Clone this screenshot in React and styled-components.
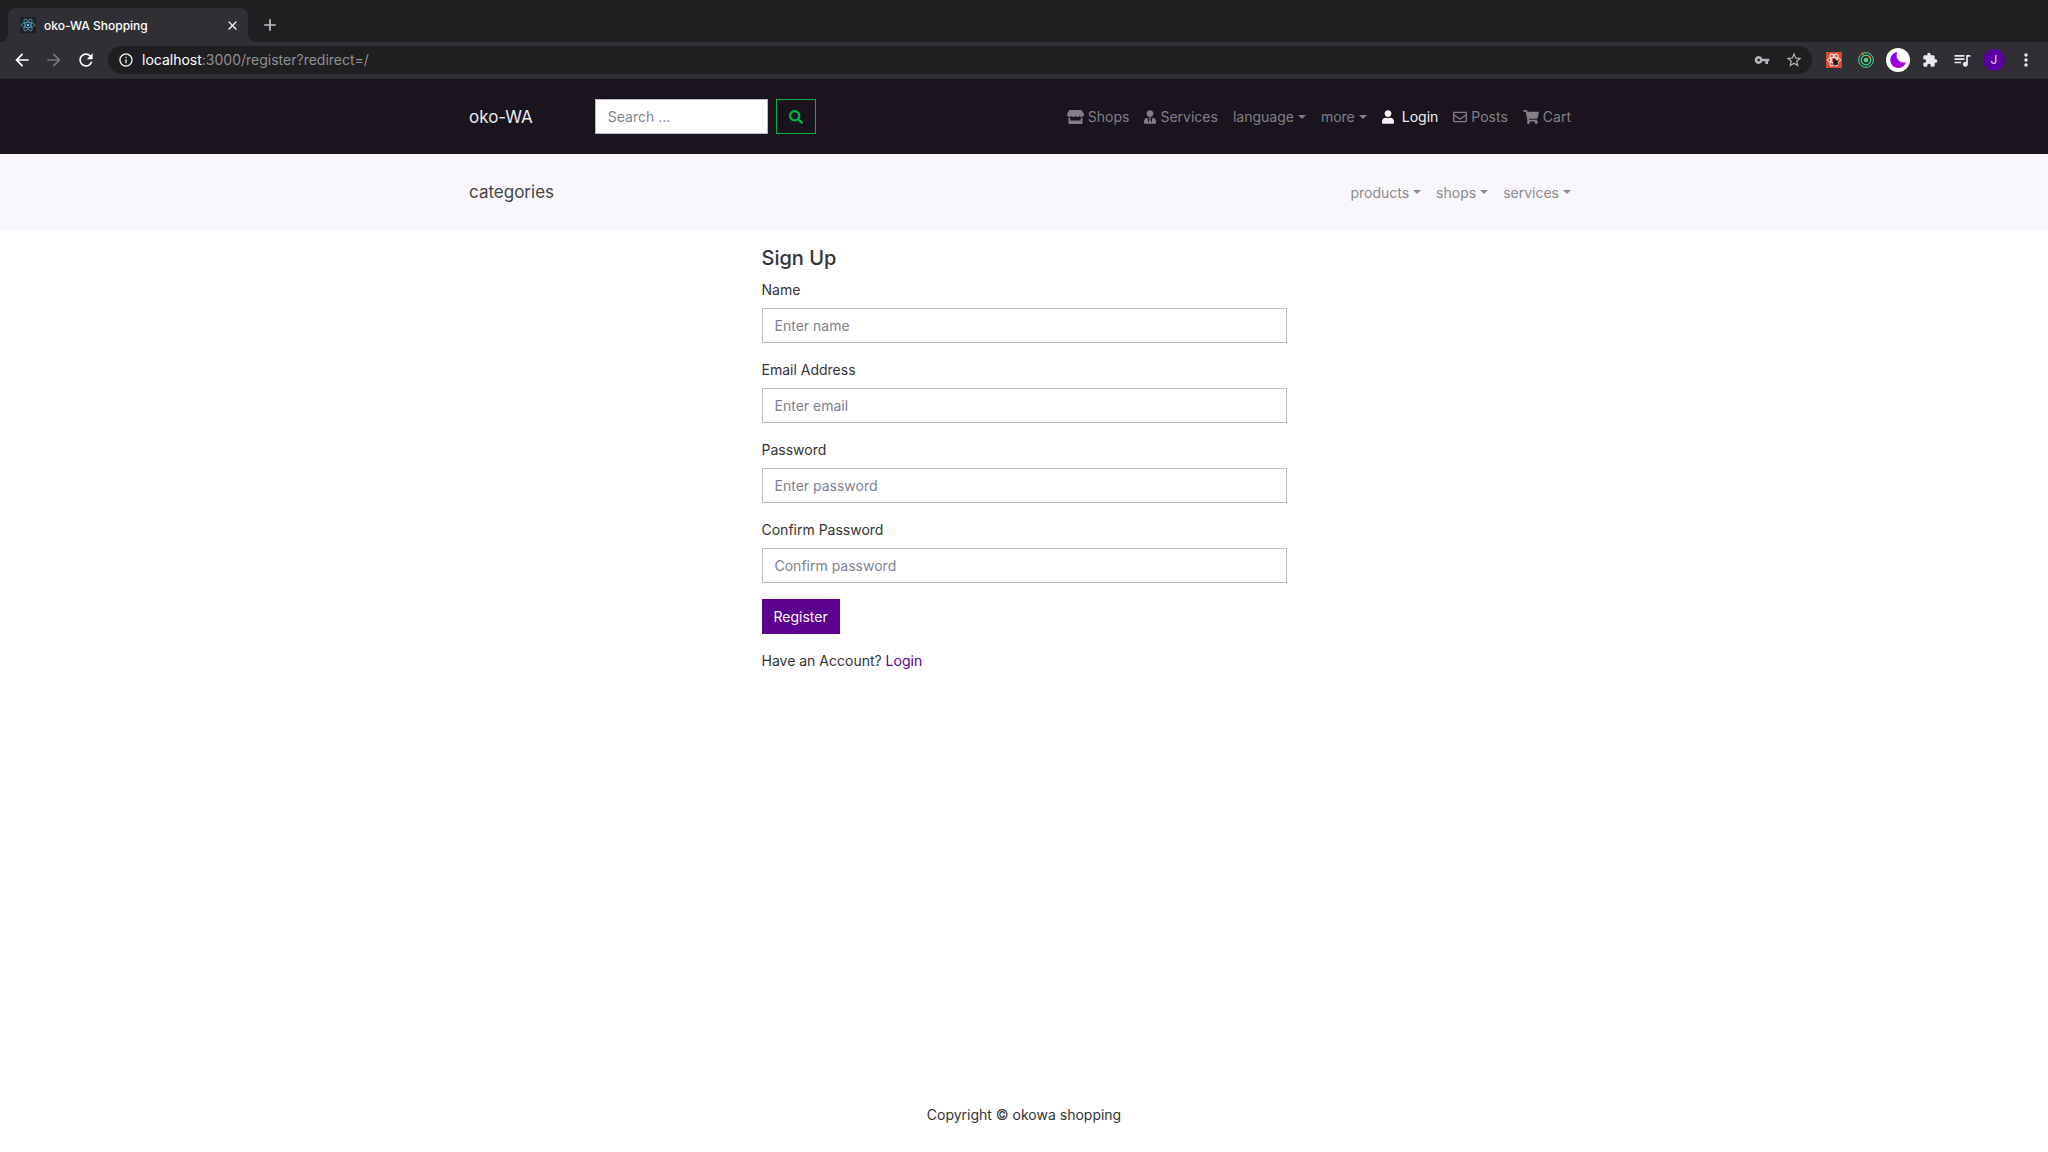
import React from "react";
import styled, { createGlobalStyle, css } from "styled-components";
import {
  FaStore,
  FaUserTie,
  FaUser,
  FaRegEnvelope,
  FaShoppingCart,
  FaSearch,
} from "react-icons/fa";
import {
  MdArrowBack,
  MdArrowForward,
  MdRefresh,
  MdClose,
  MdAdd,
  MdInfoOutline,
  MdVpnKey,
  MdStarBorder,
  MdExtension,
  MdQueueMusic,
  MdMoreVert,
} from "react-icons/md";

const c = {
  strip: "#1f1f22",
  toolbar: "#303034",
  dark: "#1a141f",
  light: "#f9f7fc",
  text: "#333333",
  primary: "#5b008f",
  success: "#00b53f",
  border: "#bdb8c4",
  placeholder: "#7d838f",
};

const GlobalStyle = createGlobalStyle`
  *, *::before, *::after { box-sizing: border-box; }
  body {
    margin: 0;
    background: #fff;
    color: ${c.text};
    font-family: Inter, Roboto, "Liberation Sans", sans-serif;
    font-size: 14px;
    line-height: 21px;
  }
  button, input { font: inherit; margin: 0; border-radius: 0; }
  button { cursor: pointer; }
  a { text-decoration: none; }
  svg { display: block; flex: none; }
`;

const Window = styled.div`
  display: flex;
  flex-direction: column;
  min-height: 100vh;
`;

/* Browser frame */

const TabStrip = styled.div`
  display: flex;
  align-items: flex-end;
  height: 42px;
  padding-left: 8px;
  background: ${c.strip};
`;

const Tab = styled.div`
  position: relative;
  display: flex;
  align-items: center;
  gap: 8px;
  width: 240px;
  height: 34px;
  padding: 0 8px 0 12px;
  border-radius: 8px 8px 0 0;
  background: ${c.toolbar};

  &::before,
  &::after {
    content: "";
    position: absolute;
    bottom: 0;
    width: 8px;
    height: 8px;
  }
  &::before {
    left: -8px;
    background: radial-gradient(circle at 0 0, transparent 8px, ${c.toolbar} 8px);
  }
  &::after {
    right: -8px;
    background: radial-gradient(circle at 100% 0, transparent 8px, ${c.toolbar} 8px);
  }
`;

const TabTitle = styled.span`
  flex: 1;
  color: #fff;
  font-size: 12px;
  font-weight: 500;
`;

const IconButton = styled.button`
  display: flex;
  align-items: center;
  justify-content: center;
  width: ${(p) => p.$size || 24}px;
  height: ${(p) => p.$size || 24}px;
  padding: 0;
  border: 0;
  background: none;
  color: ${(p) => p.$color || "#e8eaed"};
`;

const NewTabButton = styled(IconButton)`
  margin: 0 0 5px 10px;
`;

const Toolbar = styled.div`
  display: flex;
  align-items: center;
  height: 37px;
  padding-left: 10px;
  padding-right: 10px;
  border-bottom: 1px solid #29282d;
  background: ${c.toolbar};
`;

const NavButtons = styled.div`
  display: flex;
  gap: 8px;
  margin-right: 10px;
`;

const AddressBar = styled.div`
  display: flex;
  flex: 1;
  align-items: center;
  height: 28px;
  padding: 0 6px 0 10px;
  border-radius: 14px;
  background: ${c.strip};
`;

const Url = styled.span`
  flex: 1;
  margin-left: 8px;
  color: #8f9093;
  line-height: 20px;
`;

const UrlHost = styled.span`
  color: #fff;
`;

const AddressActions = styled.div`
  display: flex;
  gap: 8px;
`;

const Extensions = styled.div`
  display: flex;
  align-items: center;
  gap: 8px;
  margin-left: 10px;
`;

const Avatar = styled.button`
  width: 22px;
  height: 22px;
  padding: 0;
  border: 0;
  border-radius: 50%;
  background: #5a00a0;
  color: #e6dcf0;
  font-size: 12px;
  line-height: 22px;
`;

const ReactFavicon = () => (
  <svg width="16" height="16" viewBox="0 0 16 16" fill="none" stroke="#4ba3c3">
    <rect width="16" height="16" rx="1.5" fill="#1f2023" stroke="none" />
    <g strokeWidth="0.8">
      <ellipse cx="8" cy="8" rx="6.7" ry="2.6" />
      <ellipse cx="8" cy="8" rx="6.7" ry="2.6" transform="rotate(60 8 8)" />
      <ellipse cx="8" cy="8" rx="6.7" ry="2.6" transform="rotate(120 8 8)" />
    </g>
    <circle cx="8" cy="8" r="1.2" fill="#61dafb" stroke="none" />
  </svg>
);

const DevtoolsIcon = () => (
  <svg width="16" height="16" viewBox="0 0 16 16" fill="none">
    <rect width="16" height="16" fill="#d84a33" />
    <g stroke="#f6e4df" strokeWidth="1">
      <ellipse cx="8" cy="8" rx="6.5" ry="2.6" />
      <ellipse cx="8" cy="8" rx="6.5" ry="2.6" transform="rotate(60 8 8)" />
      <ellipse cx="8" cy="8" rx="6.5" ry="2.6" transform="rotate(120 8 8)" />
    </g>
    <ellipse cx="9.6" cy="10.6" rx="2.2" ry="2.7" fill="#24120f" />
    <circle cx="8.3" cy="8" r="1.2" fill="#24120f" />
    <path
      d="M6.5 9.5l6 3M6.5 12.6l6-3.6M8.5 13.5l3-5.5"
      stroke="#24120f"
      strokeWidth="0.7"
    />
  </svg>
);

const OrbitIcon = () => (
  <svg width="16" height="16" viewBox="0 0 16 16" fill="none" stroke="#3ddc97">
    <circle cx="8" cy="8" r="7.4" strokeWidth="1" />
    <circle cx="8" cy="8" r="4.8" strokeWidth="1.2" />
    <circle cx="8" cy="8" r="2.3" fill="#3ddc84" stroke="none" />
    <circle cx="4.5" cy="1.8" r="1.5" fill="#f2591f" stroke="none" />
    <circle cx="11.5" cy="5" r="1.4" fill="#f2591f" stroke="none" />
  </svg>
);

const MoonIcon = () => (
  <svg width="24" height="24" viewBox="0 0 24 24">
    <defs>
      <linearGradient id="moon" x1="0" y1="0" x2="0" y2="1">
        <stop offset="0" stopColor="#7a00ff" />
        <stop offset="1" stopColor="#b400c8" />
      </linearGradient>
    </defs>
    <circle cx="12" cy="12" r="12" fill="#fff" />
    <path d="M11.5 4A8 8 0 1 0 20 14A7 7 0 0 1 11.5 4Z" fill="url(#moon)" />
  </svg>
);

/* Site */

const Band = styled.header`
  background: ${(p) => (p.$dark ? c.dark : c.light)};
`;

const Container = styled.div`
  width: 100%;
  max-width: 1140px;
  margin: 0 auto;
  padding: 0 15px;
`;

const NavBar = styled(Container)`
  display: flex;
  align-items: center;
  padding-top: 20px;
  padding-bottom: 20px;
  min-height: ${(p) => (p.$tall ? 76 : 75)}px;
`;

const Brand = styled.a`
  color: ${(p) => (p.$dark ? "#ececee" : "#444")};
  font-size: 17px;
  line-height: 26px;
`;

const SearchForm = styled.form`
  display: flex;
  gap: 8px;
  margin-left: 62px;
`;

const field = css`
  height: 35px;
  padding: 6px 12px;
  border: 1px solid ${c.border};
  background: #fff;
  color: ${c.text};
  &::placeholder {
    color: ${c.placeholder};
    opacity: 1;
  }
`;

const SearchInput = styled.input`
  ${field}
  width: 173px;
`;

const SearchButton = styled.button`
  display: flex;
  align-items: center;
  justify-content: center;
  width: 40px;
  height: 35px;
  padding: 0;
  border: 1px solid ${c.success};
  background: transparent;
  color: ${c.success};
`;

const Nav = styled.nav`
  display: flex;
  gap: 15px;
  margin-left: auto;
  margin-right: 8px;
`;

const navItem = css`
  display: flex;
  align-items: center;
  gap: ${(p) => (p.$active ? 8 : 4)}px;
  padding: 0;
  border: 0;
  background: none;
  color: ${(p) => (p.$active ? "#f2f2f3" : p.$dark ? "#828086" : "#8c8b8e")};
`;

const NavLink = styled.a`
  ${navItem}
`;

const NavToggle = styled.button`
  ${navItem}
  &::after {
    content: "";
    border-top: 4px solid;
    border-left: 4px solid transparent;
    border-right: 4px solid transparent;
  }
`;

const Glyph = styled.span`
  display: flex;
  svg {
    width: ${(p) => p.$width}px;
    height: 14px;
  }
`;

const Main = styled.main`
  display: flex;
  flex: 1;
  justify-content: center;
  padding: 16px 15px;
`;

const FormColumn = styled.section`
  width: 525px;
  max-width: 100%;
`;

const Title = styled.h1`
  margin: 0 0 8px;
  font-size: 20px;
  font-weight: 500;
  line-height: 25px;
`;

const Group = styled.div`
  display: flex;
  flex-direction: column;
  margin-bottom: 16px;
`;

const Label = styled.label`
  margin-bottom: 8px;
`;

const Field = styled.input`
  ${field}
  width: 100%;
`;

const SubmitButton = styled.button`
  height: 35px;
  padding: 0 12px;
  border: 0;
  background: ${c.primary};
  color: #fff;
`;

const Hint = styled.p`
  margin: 16px 0;
  a {
    color: ${c.primary};
  }
`;

const Footer = styled.footer`
  padding: 16px 15px 27px;
  text-align: center;
`;

const topLinks = [
  { label: "Shops", Icon: FaStore, width: 17 },
  { label: "Services", Icon: FaUserTie, width: 12 },
  { label: "language", toggle: true },
  { label: "more", toggle: true },
  { label: "Login", Icon: FaUser, width: 12, active: true },
  { label: "Posts", Icon: FaRegEnvelope, width: 14 },
  { label: "Cart", Icon: FaShoppingCart, width: 16 },
];

const fields = [
  { id: "name", label: "Name", type: "text", hint: "Enter name" },
  { id: "email", label: "Email Address", type: "email", hint: "Enter email" },
  { id: "password", label: "Password", type: "password", hint: "Enter password" },
  {
    id: "confirm",
    label: "Confirm Password",
    type: "password",
    hint: "Confirm password",
  },
];

const stop = (e) => e.preventDefault();

function BrowserFrame() {
  return (
    <>
      <TabStrip>
        <Tab>
          <ReactFavicon />
          <TabTitle>oko-WA Shopping</TabTitle>
          <IconButton $size={16} $color="#fff" aria-label="Close tab">
            <MdClose size={15} />
          </IconButton>
        </Tab>
        <NewTabButton $color="#c0c3c9" aria-label="New tab">
          <MdAdd size={20} />
        </NewTabButton>
      </TabStrip>
      <Toolbar>
        <NavButtons>
          <IconButton $color="#fff" aria-label="Back">
            <MdArrowBack size={20} />
          </IconButton>
          <IconButton $color="#77777b" aria-label="Forward">
            <MdArrowForward size={20} />
          </IconButton>
          <IconButton $color="#fff" aria-label="Reload">
            <MdRefresh size={20} />
          </IconButton>
        </NavButtons>
        <AddressBar>
          <MdInfoOutline size={16} color="#f1f1f1" />
          <Url>
            <UrlHost>localhost</UrlHost>:3000/register?redirect=/
          </Url>
          <AddressActions>
            <IconButton $color="#b5b6b9" aria-label="Saved passwords">
              <MdVpnKey size={16} />
            </IconButton>
            <IconButton $color="#b5b6b9" aria-label="Bookmark">
              <MdStarBorder size={18} />
            </IconButton>
          </AddressActions>
        </AddressBar>
        <Extensions>
          <IconButton aria-label="Developer tools">
            <DevtoolsIcon />
          </IconButton>
          <IconButton aria-label="Orbit">
            <OrbitIcon />
          </IconButton>
          <IconButton aria-label="Night mode">
            <MoonIcon />
          </IconButton>
          <IconButton aria-label="Extensions">
            <MdExtension size={16} />
          </IconButton>
          <IconButton aria-label="Media">
            <MdQueueMusic size={20} />
          </IconButton>
          <IconButton as="div">
            <Avatar aria-label="Profile">J</Avatar>
          </IconButton>
          <IconButton aria-label="Menu">
            <MdMoreVert size={20} />
          </IconButton>
        </Extensions>
      </Toolbar>
    </>
  );
}

export default function App() {
  return (
    <Window>
      <GlobalStyle />
      <BrowserFrame />
      <Band $dark>
        <NavBar>
          <Brand $dark href="#home">
            oko-WA
          </Brand>
          <SearchForm onSubmit={stop}>
            <SearchInput type="text" aria-label="Search" placeholder="Search ..." />
            <SearchButton type="submit" aria-label="Submit search">
              <FaSearch size={14} />
            </SearchButton>
          </SearchForm>
          <Nav>
            {topLinks.map(({ label, Icon, width, toggle, active }) =>
              toggle ? (
                <NavToggle key={label} $dark>
                  {label}
                </NavToggle>
              ) : (
                <NavLink key={label} $dark $active={active} href={`#${label}`}>
                  <Glyph $width={width}>
                    <Icon />
                  </Glyph>
                  {label}
                </NavLink>
              )
            )}
          </Nav>
        </NavBar>
      </Band>
      <Band as="div">
        <NavBar $tall>
          <Brand href="#categories">categories</Brand>
          <Nav>
            {["products", "shops", "services"].map((label) => (
              <NavToggle key={label}>{label}</NavToggle>
            ))}
          </Nav>
        </NavBar>
      </Band>
      <Main>
        <FormColumn>
          <Title>Sign Up</Title>
          <form onSubmit={stop}>
            {fields.map(({ id, label, type, hint }) => (
              <Group key={id}>
                <Label htmlFor={id}>{label}</Label>
                <Field id={id} type={type} placeholder={hint} />
              </Group>
            ))}
            <SubmitButton type="submit">Register</SubmitButton>
          </form>
          <Hint>
            Have an Account? <a href="#login">Login</a>
          </Hint>
        </FormColumn>
      </Main>
      <Footer>Copyright © okowa shopping</Footer>
    </Window>
  );
}
